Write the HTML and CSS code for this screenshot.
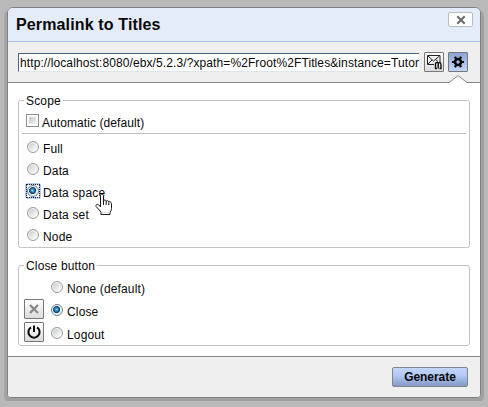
FILE: index.html
```html
<!DOCTYPE html>
<html lang="en">
<head>
<meta charset="utf-8">
<title>Permalink to Titles</title>
<link rel="stylesheet" href="styles.css">
</head>
<body>
<main class="dialog">
  <header class="header">
    <h1>Permalink to Titles</h1>
    <button class="close" aria-label="Close"><svg width="10" height="10" viewBox="0 0 10 10"><path d="M1.300 1.300l7.400 7.400m0-7.400l-7.400 7.400" stroke="#6d6d6d" stroke-width="2.200"/></svg></button>
  </header>
  <div class="toolbar">
    <div class="url">http://localhost:8080/ebx/5.2.3/?xpath=%2Froot%2FTitles&amp;instance=Tutor</div>
    <button class="icon-button mail" aria-label="Send link"><svg width="18" height="18" viewBox="0 0 18 18" fill="none"><path d="M9 11.500H2.500v-9h12.500v7M3 3l5.500 5L14.500 3M3 11l4-4M10.500 6.500l2.500 2" stroke="#222"/><path d="M10.500 15.500v-4q0-2 1.500-2t1.200 2v4m0-4q0-2 1.300-2t1.500 2v4M10 15.500h2m2.500 0h2" stroke="#111" stroke-width="1.400"/></svg></button>
    <button class="icon-button active" aria-label="Options"><svg width="18" height="18" viewBox="0 0 18 18" fill="none" stroke="#080808"><circle cx="9" cy="9" r="3" stroke-width="2.600"/><path d="M3 9h2M13 9h2M6 3.800l1 2M12 3.800l-1 2M6 14.200l1-2M12 14.200l-1-2" stroke-width="2.200"/></svg></button>
    <svg class="pointer" width="20" height="8" viewBox="0 0 20 8"><path d="M0 8L1.500 7 9.500 1h1l8 6 1.500 1z" fill="#fff"/><path d="M0 7.500h1L9.500 1h1l8.500 6.500h1" fill="none" stroke="#858585"/></svg>
  </div>
  <div class="content">
    <section class="group scope">
      <h2>Scope</h2>
      <div class="option automatic"><i class="checkbox"></i><span>Automatic (default)</span></div>
      <div class="options">
        <div class="option"><i class="radio"></i><span>Full</span></div>
        <div class="option"><i class="radio"></i><span>Data</span></div>
        <div class="option"><i class="radio checked"></i><b class="focus"></b><span>Data space</span>
          <svg class="cursor" width="18" height="23" viewBox="0 0 18 23"><path d="M5.500 14V2.500q0-1.500 1.500-1.500t1.500 1.500V8q0-1 1.300-1t1.400 1.500q.2-1 1.400-.8t1.200 1.500q.4-.8 1.500-.3t1.200 1.600v5q0 2-1.500 3.500v2.500H6V19L1.200 13.500q-.6-1.500.5-2t2 .3z" fill="#fff" stroke="#17171d"/><path d="M8.500 8v4m2.700-3.500V12m2.600-2.500V12" stroke="#17171d"/><path d="M6.500 19.500h8" stroke="#ddd"/></svg>
        </div>
        <div class="option"><i class="radio"></i><span>Data set</span></div>
        <div class="option"><i class="radio"></i><span>Node</span></div>
      </div>
    </section>
    <section class="group closing">
      <h2>Close button</h2>
      <div class="close-options">
        <div class="option"><div class="slot"></div><i class="radio"></i><span>None (default)</span></div>
        <div class="option"><div class="icon-button"><svg width="18" height="18" viewBox="0 0 18 18"><path d="M5 5l8 8m0-8l-8 8" stroke="#888" stroke-width="2.300"/></svg></div><i class="radio checked"></i><span>Close</span></div>
        <div class="option"><div class="icon-button"><svg width="18" height="18" viewBox="0 0 18 18" fill="none"><path d="M6 4.300a5.600 5.600 0 1 0 6 0M9 2.500V9" stroke="#080808" stroke-width="2"/></svg></div><i class="radio"></i><span>Logout</span></div>
      </div>
    </section>
  </div>
  <footer><button class="generate">Generate</button></footer>
</main>
</body>
</html>
```
FILE: styles.css
```css
* { box-sizing: border-box; }
body { margin: 0; padding: 7px; height: 407px; background: #b9b9b9; color: #080808; font: 12px/14px "Liberation Sans", Arial, sans-serif; letter-spacing: .15px; overflow: hidden; }
button { padding: 0; font-family: inherit; }
svg { display: block; flex: none; }
.dialog { width: 474px; height: 391px; display: flex; flex-direction: column; background: #fff; border: 1px solid #7d7f84; border-radius: 6px 6px 4px 4px; box-shadow: 0 3px 0 #a1a1a1, 3px 3px 0 #a1a1a1, -3px 3px 0 #a5a5a5; }
.header { height: 34px; flex: none; display: flex; justify-content: space-between; padding: 4px 7px 0 8px; background: #e4ebf9; border-bottom: 1px solid #a9bdea; border-radius: 5px 5px 0 0; }
h1 { margin: 2px 0 0; font-size: 16px; line-height: 21px; letter-spacing: .14px; }
.close { width: 25px; height: 15px; display: grid; place-items: center; background: #fff; border: 1px solid #bbb; border-radius: 2px; }
.toolbar { position: relative; height: 41px; flex: none; display: flex; padding: 10px 12px 0 10px; background: #efefef; border-bottom: 1px solid #858585; }
.url { width: 401px; height: 19px; margin: 1px 5px 0 0; padding: 2px 0 0 1px; background: #fff; border: 1px solid #dce6ef; border-top-color: #50637e; border-left-color: #50637e; border-right: 0; white-space: nowrap; letter-spacing: .1px; }
.icon-button { width: 20px; height: 20px; flex: none; background: linear-gradient(#fff, #dcdcdf); border: 1px solid #777; border-radius: 1px; }
.mail { margin-right: 4px; }
.active { background: linear-gradient(#8ba3d4, #c3d5fa); }
.pointer { position: absolute; left: 440px; bottom: -1px; }
.content { flex: 1; padding: 17px 10px 0; }
.group { width: 452px; border: 1px solid #c3c3c3; border-radius: 3px; }
h2 { width: max-content; height: 14px; margin: -7px 0 0 5px; padding: 0 2px; background: #fff; font-size: 12px; font-weight: normal; }
.scope { height: 148px; }
.option { display: flex; position: relative; align-items: center; height: 22px; }
.automatic { height: 26px; margin: 0 3px; padding-left: 4px; border-bottom: 1px solid #bdbdbd; letter-spacing: .08px; }
.automatic span { margin: 5px 0 0 3px; }
.checkbox { width: 13px; height: 13px; border: 1px solid #8c8e90; background: linear-gradient(135deg, #c4c8cd, #f4f4f4) content-box; padding: 2px; }
.options { padding: 2px 0 0 8px; }
.radio { width: 12px; height: 12px; flex: none; border: 1px solid #9a9c9e; border-radius: 50%; background: linear-gradient(135deg, #c0c3c6, #fafafa 80%); box-shadow: inset 0 0 0 1px #f5f5f5; }
.radio + span, .focus + span { margin: 3px 0 0 4px; }
.checked { border-color: #6c8192; background: radial-gradient(circle at 45% 45%, #6ec9ee 0 8%, #1876ad 24%, #103e65 42%, #e5edf1 50%); }
.focus { position: absolute; left: -2px; top: 3px; width: 16px; height: 16px; border: 2px solid #b5c9f5; border-radius: 3px; }
.focus::after { content: ""; position: absolute; inset: -1px; border: 1px dotted #222; }
.cursor { position: absolute; left: 68px; top: 13px; z-index: 1; }
.closing { height: 81px; margin-top: 17px; }
.close-options { display: flex; flex-direction: column; padding: 2px 0 0 5px; }
.close-options .option { height: 23px; }
.close-options .icon-button { margin-top: -2px; }
.slot { width: 20px; }
.close-options .radio { margin-left: 7px; }
.close-options span { margin-top: 4px; }
footer { height: 41px; flex: none; display: flex; justify-content: flex-end; padding: 10px 12px 0; background: #efefef; border-top: 1px solid #858585; border-radius: 0 0 3px 3px; }
.generate { width: 76px; height: 20px; background: linear-gradient(#c5d5fa, #b0c6f4 45%, #8499c5); border: 1px solid #80848c; border-radius: 2px; color: #080808; font-size: 12px; font-weight: bold; letter-spacing: -.05px; }
```
